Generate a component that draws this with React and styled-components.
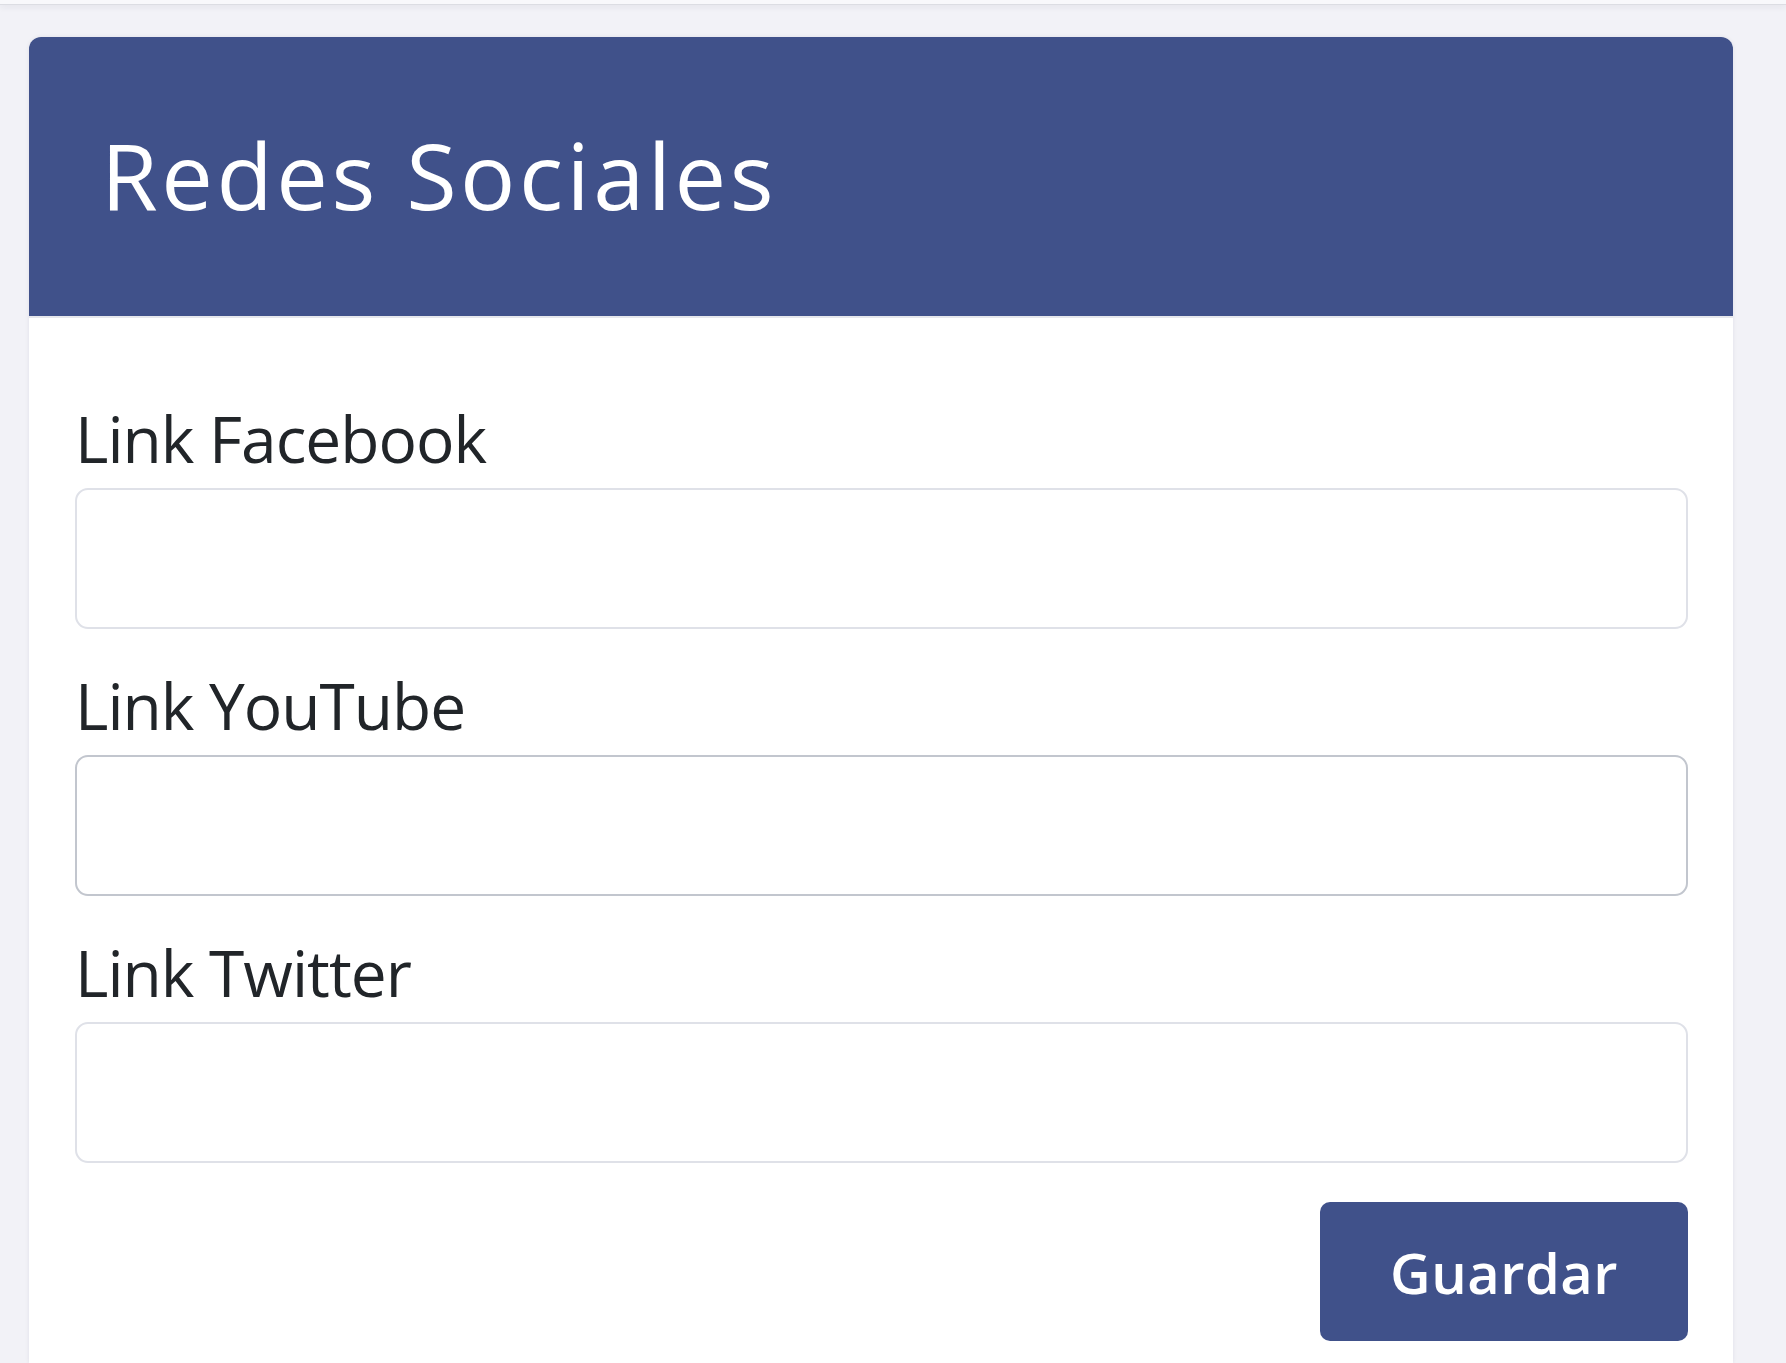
import React from 'react';
import styled, { createGlobalStyle } from 'styled-components';

const GlobalStyle = createGlobalStyle`
    html, body {
        margin: 0;
        padding: 0;
        background-color: #f2f2f7;
        font-family: "Open Sans", "Noto Sans", sans-serif;
    }
`;

const fields = [
    { id: 'facebook', label: 'Link Facebook' },
    { id: 'youtube', label: 'Link YouTube', active: true },
    { id: 'twitter', label: 'Link Twitter' },
];

const App = () => {
    return (
        <Page>
            <GlobalStyle />
            <TopBar />
            <Main>
                <Card>
                    <CardHeader>
                        <Title>Redes Sociales</Title>
                    </CardHeader>
                    <CardBody>
                        {fields.map((field) => (
                            <Field key={field.id}>
                                <Label htmlFor={field.id}>{field.label}</Label>
                                <Input id={field.id} type="text" $active={field.active} />
                            </Field>
                        ))}
                        <Actions>
                            <SaveButton type="button">Guardar</SaveButton>
                        </Actions>
                    </CardBody>
                </Card>
            </Main>
        </Page>
    );
};

const Page = styled.div`
    min-height: 1363px;
    overflow: hidden;
`;

const TopBar = styled.div`
    height: 4px;
    background-color: #f8f8fb;
    border-bottom: 1px solid #dcdde3;
    box-shadow: 0 2px 6px rgba(40, 40, 70, 0.08);
`;

const Main = styled.main`
    padding: 32px 53px 0 29px;
`;

const Card = styled.section`
    background-color: #ffffff;
    border-radius: 12px 12px 0 0;
    box-shadow: 0 0 4px rgba(30, 30, 60, 0.08);
    overflow: hidden;
`;

const CardHeader = styled.header`
    height: 275px;
    display: flex;
    align-items: center;
    padding: 0 72px 4px;
    background-color: #40518a;
    border-bottom: 2px solid #e6e7ec;
`;

const Title = styled.h1`
    margin: 0;
    font-size: 92px;
    line-height: 1;
    font-weight: 400;
    letter-spacing: 3.5px;
    color: #ffffff;
`;

const CardBody = styled.div`
    display: flex;
    flex-direction: column;
    gap: 45px;
    padding: 89px 45px 22px 46px;
`;

const Field = styled.div`
    display: flex;
    flex-direction: column;
`;

const Label = styled.label`
    font-size: 64px;
    line-height: 1;
    font-weight: 500;
    letter-spacing: -1px;
    color: #212529;
    margin-bottom: 17px;
`;

const Input = styled.input`
    box-sizing: border-box;
    height: 141px;
    width: 100%;
    border: 2px solid ${(p) => (p.$active ? '#c2c6ce' : '#dfe1e8')};
    border-radius: 13px;
    background-color: #ffffff;
    outline: none;
    font-size: 48px;
    padding: 0 24px;
`;

const Actions = styled.div`
    display: flex;
    justify-content: flex-end;
    margin-top: -6px;
`;

const SaveButton = styled.button`
    width: 368px;
    height: 139px;
    border: none;
    border-radius: 10px;
    background-color: #40518a;
    color: #ffffff;
    font-family: inherit;
    font-size: 56px;
    font-weight: 600;
    letter-spacing: 0.5px;
`;

export default App;
